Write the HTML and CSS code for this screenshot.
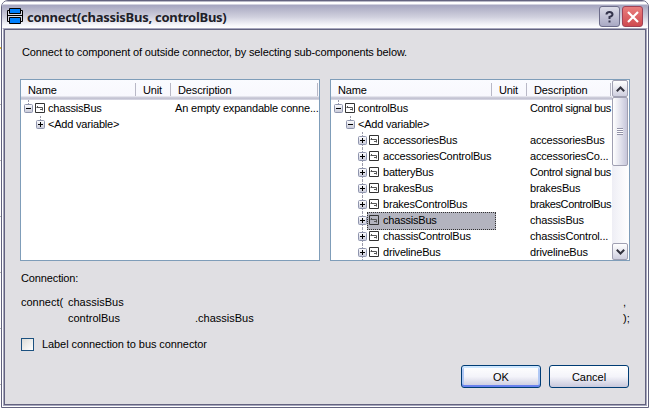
FILE: index.html
```html
<!DOCTYPE html>
<html lang="en">
<head>
<meta charset="utf-8">
<title>connect(chassisBus, controlBus)</title>
<link rel="stylesheet" href="styles.css">
</head>
<body>
<svg width="0" height="0" class="defs" aria-hidden="true">
  <symbol id="conn" viewBox="0 0 10 10"><path d="M.5.5h9v9h-9z" fill="none" stroke="#333"/><path d="M1.500 4.500h6M2.500 3v1.500M7.500 4.500v3M5 6.500h2.500" fill="none" stroke="#555"/></symbol>
  <symbol id="minus" viewBox="0 0 9 9"><rect x=".5" y=".5" width="8" height="8" rx="1" fill="url(#box)" stroke="#8f95ae"/><path d="M2 4.500h5" stroke="#000"/></symbol>
  <symbol id="plus" viewBox="0 0 9 9"><rect x=".5" y=".5" width="8" height="8" rx="1" fill="url(#box)" stroke="#8f95ae"/><path d="M2 4.500h5M4.500 2v5" stroke="#000"/></symbol>
  <linearGradient id="box" x1="0" y1="0" x2="0" y2="1"><stop offset="0" stop-color="#fff"/><stop offset="1" stop-color="#c6c8d8"/></linearGradient>
</svg>
<div class="window">
  <header class="titlebar">
    <svg class="app" width="16" height="16" viewBox="0 0 16 16"><path d="M.5 2.500h15v11H.5z" fill="#d8d8e4" stroke="#000"/><path d="M2.500.5h11v5h-11zM2.500 9.500h11v6h-11z" fill="#0080ff" stroke="#000"/><path d="M0 7.500h16" stroke="#000"/></svg>
    <h1>connect(chassisBus, controlBus)</h1>
    <button class="cap help"><svg width="9" height="12" viewBox="0 0 9 12"><path d="M1.500 3.500Q1.500 1 4.500 1T7.500 3.500Q7.500 5 4.500 6V8M4.500 9.500v2" fill="none" stroke="#34344c" stroke-width="2"/></svg></button>
    <button class="cap close"><svg width="12" height="12" viewBox="0 0 12 12"><path d="M1 1l10 10M11 1L1 11" stroke="#fff" stroke-width="2.200"/></svg></button>
  </header>
  <main>
    <p class="intro">Connect to component of outside connector, by selecting sub-components below.</p>
    <div class="lists">
      <section class="list left">
        <div class="head"><span>Name</span><span>Unit</span><span>Description</span></div>
        <div class="row l0 root"><i></i><svg class="ex"><use href="#minus"/></svg><svg class="ic"><use href="#conn"/></svg><b>chassisBus</b><em>An empty expandable conne...</em></div>
        <div class="row l1 root"><i></i><svg class="ex"><use href="#plus"/></svg><b>&lt;Add variable&gt;</b></div>
      </section>
      <section class="list right">
        <div class="tree">
          <div class="head"><span>Name</span><span>Unit</span><span>Description</span></div>
          <div class="row l0 root"><i></i><svg class="ex"><use href="#minus"/></svg><svg class="ic"><use href="#conn"/></svg><b>controlBus</b><em class="tight">Control signal bus</em></div>
          <div class="row l1 root"><i></i><svg class="ex"><use href="#minus"/></svg><b>&lt;Add variable&gt;</b></div>
          <div class="row l2"><i></i><svg class="ex"><use href="#plus"/></svg><svg class="ic"><use href="#conn"/></svg><b>accessoriesBus</b><em>accessoriesBus</em></div>
          <div class="row l2"><i></i><svg class="ex"><use href="#plus"/></svg><svg class="ic"><use href="#conn"/></svg><b>accessoriesControlBus</b><em>accessoriesCo...</em></div>
          <div class="row l2"><i></i><svg class="ex"><use href="#plus"/></svg><svg class="ic"><use href="#conn"/></svg><b>batteryBus</b><em class="tight">Control signal bus</em></div>
          <div class="row l2"><i></i><svg class="ex"><use href="#plus"/></svg><svg class="ic"><use href="#conn"/></svg><b>brakesBus</b><em>brakesBus</em></div>
          <div class="row l2"><i></i><svg class="ex"><use href="#plus"/></svg><svg class="ic"><use href="#conn"/></svg><b>brakesControlBus</b><em class="tight">brakesControlBus</em></div>
          <div class="row l2 sel"><i></i><svg class="ex"><use href="#plus"/></svg><svg class="ic"><use href="#conn"/></svg><b>chassisBus</b><em>chassisBus</em></div>
          <div class="row l2"><i></i><svg class="ex"><use href="#plus"/></svg><svg class="ic"><use href="#conn"/></svg><b>chassisControlBus</b><em>chassisControl...</em></div>
          <div class="row l2"><i></i><svg class="ex"><use href="#plus"/></svg><svg class="ic"><use href="#conn"/></svg><b>drivelineBus</b><em>drivelineBus</em></div>
        </div>
        <div class="scroll">
          <div class="arrow"><svg width="9" height="6" viewBox="0 0 9 6"><path d="M.8 5.200L4.500 1.500 8.200 5.200" fill="none" stroke="#33333f" stroke-width="2"/></svg></div>
          <div class="thumb"><span></span></div>
          <div class="arrow down"><svg width="9" height="6" viewBox="0 0 9 6"><path d="M.8.8L4.500 4.500 8.200.8" fill="none" stroke="#33333f" stroke-width="2"/></svg></div>
        </div>
      </section>
    </div>
    <p class="label">Connection:</p>
    <div class="code"><span>connect(</span><span>chassisBus</span><span></span><span>,</span><span></span><span>controlBus</span><span>.chassisBus</span><span>);</span></div>
    <label class="check"><span class="tick"></span><span>Label connection to bus connector</span></label>
    <footer><button class="btn ok">OK</button><button class="btn">Cancel</button></footer>
  </main>
</div>
</body>
</html>
```
FILE: styles.css
```css
* { box-sizing: border-box; }
body { margin: 0; width: 649px; height: 408px; overflow: hidden; background: linear-gradient(#e8b828, #e8b828) 0 47px / 1px 2px no-repeat, linear-gradient(#fff, #fff) 0 49px / 1px 50px no-repeat, repeating-linear-gradient(#fff 0 48px, #b8b8b8 48px 49px, #fff 49px 56px) #fff; padding-left: 1px; font: 11px/16px "Liberation Sans", Arial, sans-serif; letter-spacing: -.13px; color: #000; }
.defs { position: absolute; }
h1, p { margin: 0; }
button { padding: 0; font: inherit; color: inherit; }
.window { width: 648px; height: 408px; border: 1px solid #63637f; border-radius: 7px 7px 0 0; padding: 0 1px 1px; background: #fff; overflow: hidden; }
.titlebar { height: 28px; margin: 0 -1px; padding: 5px 5px 0 5px; display: flex; background: linear-gradient(#72728f 0, #fff 1px, #fff 3px, #a5a5c0 4px, #b4b4ca 8px, #d0d0de 16px, #f6f6fa 24px, #fff 27px, #c0c0d2 28px); }
.app { margin-top: 2px; flex: none; }
h1 { flex: 1; margin-left: 4px; font: bold 13px/22px "Noto Sans", sans-serif; letter-spacing: -.27px; color: #202028; white-space: nowrap; }
.cap { width: 21px; height: 21px; border: 1px solid #6c6c8a; border-radius: 3px; margin-left: 2px; display: flex; align-items: center; justify-content: center; background: linear-gradient(#dcdce8, #a9a9c4); }
.close { border-color: #a14256; background: linear-gradient(#e97d7d, #cf4a50); }
main { height: 376px; border: 1px solid #63637f; outline: 1px solid #a8a8bf; margin: 0 1px; background: #e0dfe3; padding: 14px 15px 0; }
.intro { padding-left: 2px; height: 35px; white-space: nowrap; }
.lists { display: flex; gap: 10px; height: 182px; }
.list { width: 300px; flex: none; border: 1px solid #7f9db9; background: #fff; overflow: hidden; }
.right { display: flex; }
.tree { width: 281px; overflow: hidden; }
.head { height: 20px; display: grid; grid-template-columns: 115px 35px 147px; background: linear-gradient(#fafbff, #f8f8fd 16px, #d0d0dc 17px, #bfbfd0 19px, #e6e6ef); }
.right .head { grid-template-columns: 161px 35px 84px; }
.head span { height: 13px; margin-top: 3px; line-height: 14px; border-right: 1px solid #b8b8c6; padding-left: 7px; }
.row { height: 16px; display: flex; align-items: center; position: relative; white-space: nowrap; padding-left: 3px; }
.row b { font-weight: normal; letter-spacing: -.2px; }
.row em { font-style: normal; position: absolute; left: 154px; width: 144px; letter-spacing: -.18px; }
.right .row em { left: 199px; width: 82px; }
.right .row .tight { letter-spacing: -.4px; }
.l1 { padding-left: 15px; }
.l2 { padding-left: 27px; }
.row i { width: 0; height: 16px; border-left: 1px dotted #9a9aaa; margin: 0 -5px 0 4px; }
.root i { height: 8px; align-self: flex-start; }
.ex { width: 9px; height: 9px; flex: none; margin-right: 3px; position: relative; }
.ic { width: 10px; height: 10px; flex: none; margin: 0 3px 0 -1px; }
.l2 .ic { margin-right: 4px; position: relative; }
.l2 b { position: relative; }
.sel::before { content: ""; position: absolute; left: 36px; top: 0; width: 127px; height: 16px; border: 1px dotted #333; background: #b3b4bf; }
.scroll { width: 17px; background: linear-gradient(90deg, #eeeef5, #fff); display: flex; flex-direction: column; }
.arrow, .thumb { width: 16px; height: 17px; border: 1px solid #a0a0b2; border-radius: 2px; background: linear-gradient(#fff, #cfcfdf); display: flex; align-items: center; justify-content: center; }
.thumb { height: 69px; background: linear-gradient(90deg, #fff, #dedeea 60%, #c6c6da); }
.thumb span { width: 6px; height: 7px; background: repeating-linear-gradient(#9292a8 0 1px, #fff 1px 2px); }
.down { margin-top: auto; }
.label { padding-left: 1px; margin-top: 9px; }
.code { display: grid; grid-template-columns: 47px 127px 428px 10px; margin: 8px 0 0 1px; letter-spacing: 0; }
.check { display: flex; gap: 8px; margin-top: 10px; letter-spacing: -.08px; }
.tick { width: 13px; height: 13px; border: 1px solid #1c5180; margin: 2px 0 0 1px; background: linear-gradient(135deg, #dcdcd7, #fff); }
footer { display: flex; justify-content: flex-end; gap: 8px; margin: 13px 1px 0 0; }
.btn { width: 80px; height: 23px; border: 1px solid #003c74; border-radius: 3px; background: linear-gradient(#fff, #f4f4fa 50%, #c8c8dc); }
.ok { box-shadow: inset 0 2px #cee7ff, inset 0 -2px #6982ee, inset 2px 0 #b0c8f5, inset -2px 0 #b0c8f5; }
```
